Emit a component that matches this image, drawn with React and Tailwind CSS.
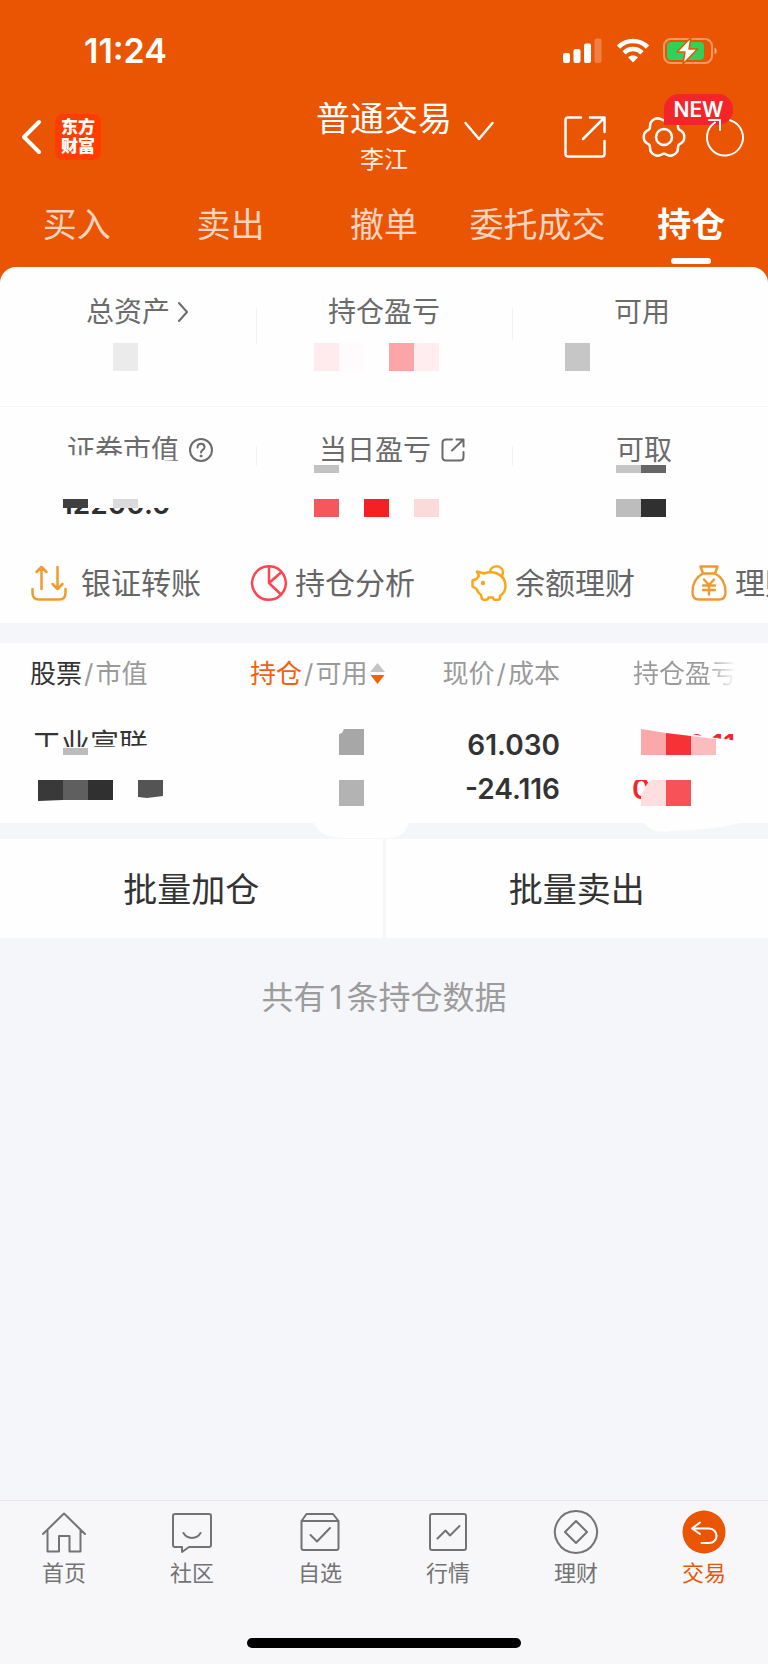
import React from 'react';

const TABS = ['买入', '卖出', '撤单', '委托成交', '持仓'];

// six flat lobes, the second harmonic squares them off
const gearPath = Array.from({ length: 72 }, (_, i) => {
  const a = (i * Math.PI) / 36;
  const r = 18.8 + 1.8 * Math.cos(6 * a) - 0.4 * Math.cos(12 * a);
  return `${i ? 'L' : 'M'}${(22 + r * Math.cos(a)).toFixed(1)} ${(22 + r * Math.sin(a)).toFixed(1)}`;
}).join('') + 'Z';

function Icon({ w, h, className = '', children }) {
  return (
    <svg width={w} height={h} viewBox={`0 0 ${w} ${h}`} fill="none" stroke="currentColor" strokeWidth="2" strokeLinecap="round" strokeLinejoin="round" aria-hidden="true" className={`shrink-0 overflow-visible ${className}`}>
      {children}
    </svg>
  );
}

function StatusBar() {
  return (
    <div className="flex h-[102px] items-center justify-between pl-[84px] pr-[50px]">
      <div className="text-[34px] leading-[36px] font-semibold">11:24</div>
      <div className="flex items-center">
        <Icon w={39} h={26} className="mr-[15px]">
          <g fill="currentColor" stroke="none">
            <rect x="0" y="15" width="7" height="10" rx="2" />
            <rect x="10.5" y="11" width="7" height="14" rx="2" />
            <rect x="21" y="5.5" width="7" height="19.5" rx="2" />
            <rect x="31.5" y="0.5" width="7" height="24.5" rx="2" opacity="0.25" />
          </g>
        </Icon>
        <Icon w={32} h={26} className="mr-[14px]">
          <g strokeWidth="4.6" strokeLinecap="butt">
            <path d="M1.5 9.2C9.5 1 22.500 1 30.500 9.200" />
            <path d="M7 14.800C12 9.800 20 9.800 25 14.800" />
          </g>
          <path d="M11 19.300C14 16.800 18 16.800 21 19.300L16 24.500Z" fill="currentColor" stroke="none" />
        </Icon>
        <Icon w={55} h={28}>
          <rect x="1" y="2" width="48" height="24" rx="7" opacity="0.4" />
          <rect x="4" y="5" width="37" height="18" rx="4" fill="#30d158" stroke="none" />
          <path d="M51.500 10.500C54.500 12 54.500 16 51.500 17.500Z" fill="currentColor" stroke="none" opacity="0.5" />
          <path d="M28 0.500L14 15H22L20 27L34.500 12H26Z" fill="currentColor" stroke="#ea5504" strokeWidth="1.5" />
        </Icon>
      </div>
    </div>
  );
}

function NavBar() {
  return (
    <div className="grid h-[70px] grid-cols-[1fr_auto_1fr] items-center">
      <div className="flex items-center pl-5">
        <button aria-label="返回" className="mr-[13px]">
          <Icon w={22} h={36}><path d="M19 3L4 18L19 33" strokeWidth="4" /></Icon>
        </button>
        <div className="flex h-[46px] w-[46px] items-center justify-center rounded-lg bg-[#ff3d00] text-center text-[17px] leading-[19px] font-black">
          <span>东方<br />财富</span>
        </div>
      </div>
      <button className="grid grid-cols-[30px_auto_30px] items-center gap-3">
        <span className="col-start-2">
          <span className="block text-[34px] leading-[34px]">普通交易</span>
          <span className="mt-3 block text-[24px] leading-[24px] text-white/90">李江</span>
        </span>
        <Icon w={30} h={20} className="-mt-3"><path d="M1.500 2L15 18L28.500 2" strokeWidth="2.500" /></Icon>
      </button>
      <div className="flex items-center justify-end pr-6">
        <button aria-label="分享" className="mr-[36px]">
          <Icon w={42} h={42}>
            <path d="M17 1.500H4Q1.500 1.500 1.500 4V38Q1.500 40.500 4 40.500H38Q40.500 40.500 40.500 38V25M26 1.500H40.500V16M40 2L19 23" strokeWidth="2.500" />
          </Icon>
        </button>
        <button aria-label="设置" className="mr-[20px]">
          <Icon w={44} h={44}>
            <path d={gearPath} strokeWidth="2.500" />
            <circle cx="22" cy="22" r="8" strokeWidth="2.500" />
          </Icon>
        </button>
        <button aria-label="刷新" className="relative">
          <span className="absolute -top-6 -left-[42px] h-[31px] w-[69px] rounded-[15px] rounded-bl-none bg-[#f42529] text-center text-[21px] leading-[31px] font-semibold">NEW</span>
          <Icon w={38} h={38} className="relative">
            <path d="M24 2.200A18 18 0 1 1 9 4.500M3 2H14V12" />
          </Icon>
        </button>
      </div>
    </div>
  );
}

function Tabs() {
  return (
    <nav className="grid grid-cols-5">
      {TABS.map((t) => {
        const active = t === '持仓';
        return (
          <button key={t} className={`flex flex-col items-center pt-[35px] pb-[3px] text-[34px] leading-[36px] whitespace-nowrap ${active ? 'font-bold text-white' : 'text-white/75'}`}>
            {t}
            <span className={`mt-[15px] h-1.5 w-10 rounded-full ${active ? 'bg-white' : ''}`} />
          </button>
        );
      })}
    </nav>
  );
}

// a strip of 25px mosaic tiles, '' leaves a hole
function Mosaic({ tiles, className }) {
  return (
    <div className={`relative flex ${className}`} aria-hidden="true">
      {tiles.map((c, i) => <span key={i} className="w-[25px] shrink-0" style={{ background: c }} />)}
    </div>
  );
}

const cellLabel = 'flex h-7 items-center justify-center text-[28px] leading-[28px] text-[#6b6b6b] whitespace-nowrap';

function Summary() {
  return (
    <section>
      <div className="grid grid-cols-3 pt-[31px] pb-[35px]">
        <div>
          <div className={cellLabel}>
            <span className="ml-[20px]">总资产</span>
            <Icon w={14} h={22} className="ml-1.5"><path d="M3 2L11 11L3 20" /></Icon>
          </div>
          <Mosaic tiles={['', '', '#ebebeb']} className="mt-[17px] h-7 pl-[63px]" />
        </div>
        <div className="relative">
          <span className="absolute top-[10px] left-0 h-[36px] w-px bg-[#f3f3f4]" />
          <div className={cellLabel}>持仓盈亏</div>
          <Mosaic tiles={['#ffebed', '#fffafb', '', '#fba5a8', '#ffedef']} className="mt-[17px] h-7 pl-[58px]" />
        </div>
        <div className="relative">
          <span className="absolute top-[10px] left-0 h-[32px] w-px bg-[#f3f3f4]" />
          <div className={`${cellLabel} pl-1`}>可用</div>
          <Mosaic tiles={['#c6c6c6']} className="mt-[17px] h-7 pl-[53px]" />
        </div>
      </div>
      <div className="grid grid-cols-3 border-t border-[#f5f5f6] pt-[29px]">
        <div className="relative">
          <div className={cellLabel}>
            <span className="ml-[24px]">证券市值</span>
            <Icon w={24} h={24} className="ml-[10px]">
              <circle cx="12" cy="12" r="11" />
              <path d="M8.500 9.500C8.500 4.500 15.500 4.800 15.500 9.200C15.500 11.800 12 12 12 14.500" />
              <circle cx="12" cy="18" r="1" fill="currentColor" strokeWidth="1" />
            </Icon>
          </div>
          <svg width="190" height="26" viewBox="0 0 190 26" fill="#fefefe" className="absolute top-[18px] left-0" aria-hidden="true">
            <path d="M20 8C40 0 70 1 120 1.500C140 2 160 7 182 7V26H20Z" />
          </svg>
          <Mosaic tiles={['#404040', '', '#dadada']} className="mt-[35px] h-[9px] pl-[63px]" />
          <div className="flex h-1.5 items-end overflow-hidden pl-[61px] text-[28px] leading-[20px] font-semibold text-[#2f2f2f]">12200.0</div>
        </div>
        <div className="relative">
          <span className="absolute top-[10px] left-0 h-[20px] w-px bg-[#f3f3f4]" />
          <div className={cellLabel}>
            <span>当日盈亏</span>
            <Icon w={24} h={24} className="ml-[10px] mr-[-16px]">
              <path d="M11 1.500H5Q1.500 1.500 1.500 5V19Q1.500 22.500 5 22.500H19Q22.500 22.500 22.500 19V14M15.500 1.500H22.500V8.500M22 2L11 12.500" />
            </Icon>
          </div>
          <Mosaic tiles={['#c2c2c2']} className="mt-px h-2 pl-[58px]" />
          <Mosaic tiles={['#f5585c', '', '#f52024', '', '#fddada']} className="mt-[26px] h-[18px] pl-[58px]" />
        </div>
        <div className="relative">
          <span className="absolute top-[10px] left-0 h-[20px] w-px bg-[#f3f3f4]" />
          <div className={`${cellLabel} pl-2`}>可取</div>
          <Mosaic tiles={['', '', '#c5c5c5', '#666666']} className="mt-px h-2 pl-[54px]" />
          <Mosaic tiles={['', '', '#bdbdbd', '#303030']} className="mt-[26px] h-[18px] pl-[54px]" />
        </div>
      </div>
    </section>
  );
}

const ACTIONS = [
  {
    label: '银证转账', color: 'text-[#f29a2e]', gap: 'gap-[14px]',
    icon: <path d="M1.500 24V28Q1.500 34.500 8 34.500H28Q34.500 34.500 34.500 28V24M10.500 24V2M5.500 7L10.500 2L15.500 7M26.500 2V24M21.500 19L26.500 24L31.500 19" strokeWidth="2.500" />,
  },
  {
    label: '持仓分析', color: 'text-[#fb4650]', gap: 'gap-2',
    icon: <path d="M18 1.200A16.800 16.800 0 1 1 17.900 1.200M18 1.500V18L30 29.500M18 18L30.500 7" strokeWidth="2.500" />,
  },
  {
    label: '余额理财', color: 'text-[#faa619]', gap: 'gap-2',
    icon: (
      <g strokeWidth="2.500">
        <path d="M6 6.500L13 8.500C16 7.500 22 7 26 8.500C32 11 34.500 16 34.500 21C34.500 25 32 29 29 31V33Q29 34.800 27 34.800H24Q22.500 34.800 22 32.500H17.500Q17 34.800 15 34.800H13Q11 34.800 10.500 32.500L10 30C8 28.500 6.500 26.500 5.500 24L1.500 21.500V15.500L5.500 14L8 11Z" />
        <path d="M19 7C19.500 0 31 -1 32 7C32 9 31.500 10 31 11" />
        <circle cx="12" cy="18" r="1" fill="currentColor" />
      </g>
    ),
  },
  {
    label: '理财', color: 'text-[#f3982f]', gap: 'gap-2',
    icon: (
      <g strokeWidth="2.400">
        <path d="M9.500 1.500H26.500L24 8.500H12ZM12 8.500C5 12 1.500 19 1.500 27Q1.500 34.500 8 34.500H28Q34.500 34.500 34.500 27C34.500 19 31 12 24 8.500" />
        <path d="M13 14.500L18 20L23 14.500M18 20V29.500M12 20.500H24M12 25H24" />
      </g>
    ),
  },
];

function QuickActions() {
  return (
    <div className="mt-[26px] flex h-20 items-center overflow-hidden pl-[31px]">
      {ACTIONS.map((a) => (
        <button key={a.label} className={`flex w-[220px] shrink-0 items-center text-[30px] leading-[36px] text-[#666] whitespace-nowrap ${a.gap}`}>
          <Icon w={36} h={36} className={a.color}>{a.icon}</Icon>
          {a.label}
        </button>
      ))}
    </div>
  );
}

function Slash() {
  return <span className="px-[2px] text-[#9a9a9a]">/</span>;
}

function Holdings() {
  return (
    <section className="mt-5 bg-[#fefefe]">
      <table className="w-full table-fixed border-collapse text-[26px] leading-[36px] text-[#9a9a9a]">
        <thead>
          <tr className="h-[62px] whitespace-nowrap">
            <th scope="col" className="w-[250px] pl-[30px] text-left font-normal"><span className="text-[#333]">股票</span><Slash />市值</th>
            <th scope="col" aria-sort="descending" className="w-[138px] text-left font-normal">
              <button className="flex items-center">
                <span className="text-[#f5600f]">持仓</span><Slash />可用
                <Icon w={15} h={22} className="ml-[3px]">
                  <path d="M7.500 0L15 9H0Z" fill="#c4c4c4" stroke="none" />
                  <path d="M0.500 12H14.500L7.500 21Z" fill="#f5600f" stroke="none" />
                </Icon>
              </button>
            </th>
            <th scope="col" className="w-[172px] text-right font-normal">现价<Slash />成本</th>
            <th scope="col" className="pl-[73px] text-left font-normal">
              <span className="bg-linear-to-r from-[#9a9a9a] from-70% to-transparent bg-clip-text text-transparent">持仓盈亏</span>
            </th>
          </tr>
        </thead>
        <tbody>
          <tr className="h-[118px] align-top text-[28px] font-semibold">
            <td className="relative pt-[22px] pl-[32px] text-[#333]">
              <div className="text-[29px] font-normal">工业富联</div>
              <svg width="250" height="96" viewBox="0 0 250 96" className="absolute top-[22px] left-0" aria-hidden="true">
                <path d="M12 20H110L152 18V50H12Z" fill="#fefefe" />
                <path d="M63 21H88V28H63Z" fill="#bcbcbc" />
                <path d="M38 53H63V73L38 74Z" fill="#393939" />
                <path d="M63 53H88V73H63Z" fill="#5f5f5f" />
                <path d="M88 53H113V73H88Z" fill="#303030" />
                <path d="M138 53H163V69L147 71L138 70Z" fill="#545454" />
              </svg>
            </td>
            <td className="relative pt-[22px]">
              <svg width="138" height="80" viewBox="0 0 138 80" aria-hidden="true">
                <path d="M89 7L92 6L94 2H114V28H89Z" fill="#a7a7a7" />
                <path d="M89 53H114V79H89Z" fill="#b3b3b3" />
              </svg>
            </td>
            <td className="pt-[22px] text-right text-[#333]">
              <div>61.030</div>
              <div className="mt-2">-24.116</div>
            </td>
            <td className="relative pt-[22px] text-[#f42529]">
              <div className="w-[175px] text-right">7240.11</div>
              <div className="mt-2 pl-[72px]">0</div>
              <svg width="200" height="96" viewBox="0 0 200 96" className="absolute top-[22px] left-0" aria-hidden="true">
                <path d="M60 0H120L130 7L156 11L178 14V44H60Z" fill="#fefefe" />
                <path d="M66 44H178V53H66ZM82 62L89 57L95 70L106 82H80Z" fill="#fefefe" />
                <path d="M81 2L106 6V28H81Z" fill="#fba8ab" />
                <path d="M106 6L131 9V28H106Z" fill="#f63236" />
                <path d="M131 9L156 12V28H131Z" fill="#fcbcbf" />
                <path d="M87 57L91 53H106V79H81V68Z" fill="#ffdedf" />
                <path d="M106 53H131V79H106Z" fill="#f75357" />
              </svg>
            </td>
          </tr>
        </tbody>
      </table>
    </section>
  );
}

function BatchActions() {
  return (
    <>
      <div className="relative h-4">
        <svg width="440" height="16" viewBox="0 0 440 16" fill="#fefefe" className="absolute top-0 left-[310px]" aria-hidden="true">
          <path d="M4 0C8 10 16 15 40 15H78C90 15 97 8 99 0ZM334 0C342 8 348 10 362 8C385 7 405 6 430 0Z" />
        </svg>
      </div>
      <div className="grid grid-cols-2 gap-[3px]">
        <button className="h-[99px] bg-[#fefefe] pt-[2px] text-[34px] text-[#333]">批量加仓</button>
        <button className="h-[99px] bg-[#fefefe] pt-[2px] text-[34px] text-[#333]">批量卖出</button>
      </div>
    </>
  );
}

const NAV = [
  { label: '首页', icon: <path d="M1 22L22 1.500L43 22M5.500 18V39.500H17V24H27.500V39.500H38.500V18" /> },
  { label: '社区', icon: <path d="M5 2H39Q41 2 41 4V33Q41 35 39 35H19L12 40V35H5Q3 35 3 33V4Q3 2 5 2ZM13.500 21C17 27.500 27 27.500 30.500 21" /> },
  { label: '自选', icon: <path d="M3.500 9L8.500 2H35L40.500 9V36Q40.500 38 38.500 38H5.500Q3.500 38 3.500 36ZM3.500 9H40.500M12.500 23L19 29.500L32 16" /> },
  { label: '行情', icon: <path d="M6 2H38Q40 2 40 4V36Q40 38 38 38H6Q4 38 4 36V4Q4 2 6 2ZM11.500 26.500L19.500 18.500L24 23.500L33.500 14" /> },
  { label: '理财', icon: <path d="M22 -1A21 21 0 1 1 21.900 -1M22 9L33 20L22 31L11 20Z" /> },
  {
    label: '交易', active: true,
    icon: (
      <>
        <circle cx="22" cy="20" r="21.500" fill="#ea5504" stroke="none" />
        <path d="M18 10.500L10 16.500L18 22M10.500 16.500H27C37 17 37 31 27 31H19.500" stroke="#fff" />
      </>
    ),
  },
];

function BottomNav() {
  return (
    <footer className="mt-auto border-t border-[#ebe6e8] bg-[#f7f7fa]">
      <nav className="grid grid-cols-6 pt-[11px]">
        {NAV.map((n) => (
          <a key={n.label} href="#" className={`flex flex-col items-center text-[22px] leading-[24px] ${n.active ? 'text-[#ea5504]' : 'text-[#737373]'}`}>
            <Icon w={44} h={42}>{n.icon}</Icon>
            <span className="mt-[7px]">{n.label}</span>
          </a>
        ))}
      </nav>
      <div className="mx-auto mt-[53px] mb-4 h-[10px] w-[274px] rounded-full bg-black" />
    </footer>
  );
}

export default function App() {
  return (
    <div className="flex min-h-screen flex-col overflow-x-hidden bg-[#f5f6f9] font-['Inter','Noto_Sans_CJK_SC',sans-serif]">
      <header className="bg-[#ea5504] pb-5 text-white">
        <StatusBar />
        <NavBar />
        <Tabs />
      </header>
      <main>
        <div className="-mt-5 rounded-t-[16px] bg-[#fefefe]">
          <Summary />
          <QuickActions />
        </div>
        <Holdings />
        <BatchActions />
        <p className="mt-[40px] text-center text-[32px] leading-[40px] text-[#9c9c9c]">共有<span className="px-1">1</span>条持仓数据</p>
      </main>
      <BottomNav />
    </div>
  );
}
